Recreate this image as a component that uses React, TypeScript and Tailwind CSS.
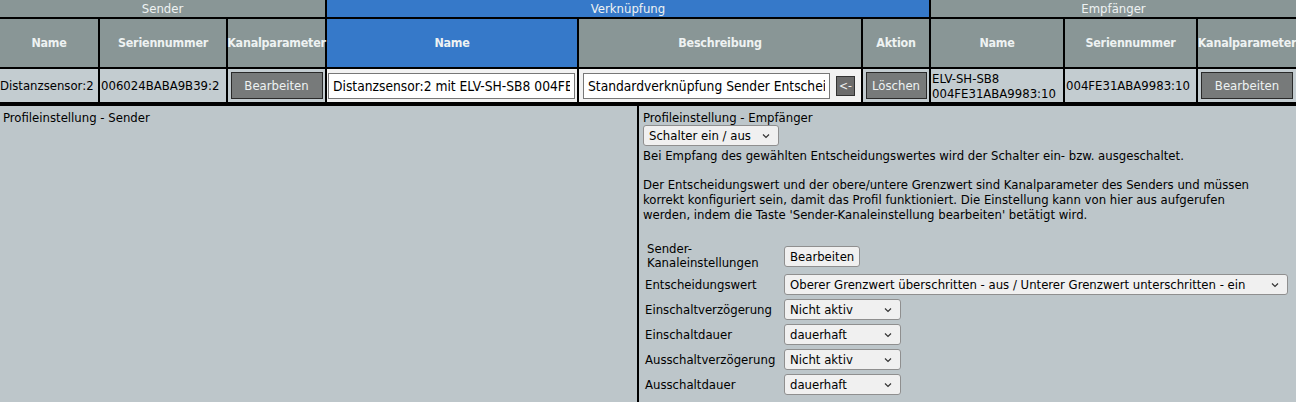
import React from "react";

/* ---------------- HELPERS ---------------- */

const font = "font-['DejaVu_Sans_Condensed','DejaVu_Sans',sans-serif]";

function GrayBtn({ label, className = "" }: { label: string; className?: string }) {
  return (
    <button
      className={`bg-[#777a7a] border border-[#2a2a2a] text-[#eef2f2] text-[13px] leading-none ${className}`}
    >
      {label}
    </button>
  );
}

function Select({ value, className = "" }: { value: string; className?: string }) {
  return (
    <div
      className={`flex items-center justify-between h-[21px] bg-[#f0f0f0] border border-[#8f8f8f] rounded-[3px] pl-[5px] pr-[8px] text-[13px] text-black ${className}`}
    >
      <span className="whitespace-nowrap">{value}</span>
      <svg width="8" height="6" viewBox="0 0 8 6" className="ml-2 shrink-0">
        <path d="M1 1.5 L4 4.5 L7 1.5" fill="none" stroke="#333" strokeWidth="1.2" />
      </svg>
    </div>
  );
}

const HeadCell = ({ label, blue }: { label: string; blue?: boolean }) => (
  <div
    className={`flex items-center justify-center font-bold text-[12.4px] tracking-[-0.2px] text-[#eef2f2] whitespace-nowrap ${
      blue ? "bg-[#3679c9]" : "bg-[#899696]"
    }`}
  >
    {label}
  </div>
);

const TextInput = ({ value }: { value: string }) => (
  <input
    readOnly
    value={value}
    className="w-[247px] h-[26px] bg-white border border-[#777] px-[4px] text-[13.7px] text-black outline-none"
  />
);

/* ---------------- FORM ROWS ---------------- */

const formRows = [
  { label: "Entscheidungswert", value: "Oberer Grenzwert überschritten - aus / Unterer Grenzwert unterschritten - ein", w: "w-[504px]" },
  { label: "Einschaltverzögerung", value: "Nicht aktiv", w: "w-[117px]" },
  { label: "Einschaltdauer", value: "dauerhaft", w: "w-[117px]" },
  { label: "Ausschaltverzögerung", value: "Nicht aktiv", w: "w-[117px]" },
  { label: "Ausschaltdauer", value: "dauerhaft", w: "w-[117px]" },
];

/* ---------------- APP ---------------- */

export default function App() {
  return (
    <div className={`${font} w-[1296px] h-[402px] bg-[#bdc6ca] text-[13px] text-black overflow-hidden flex flex-col`}>
      {/* TOP TABLE */}
      <div className="grid grid-cols-[98px_126px_97px_250px_282px_66px_132px_131px_98px] grid-rows-[17px_48px_33px] gap-[2px] bg-black border-b-[4px] border-black">
        {/* group headers */}
        <div className="col-span-3 flex items-center justify-center bg-[#899696] text-[#eef2f2] text-[13px]">Sender</div>
        <div className="col-span-3 flex items-center justify-center bg-[#3679c9] text-[#eef2f2] text-[13px]">Verknüpfung</div>
        <div className="col-span-3 flex items-center justify-center bg-[#899696] text-[#eef2f2] text-[13px]">Empfänger</div>

        {/* column headers */}
        <HeadCell label="Name" />
        <HeadCell label="Seriennummer" />
        <HeadCell label="Kanalparameter" />
        <HeadCell label="Name" blue />
        <HeadCell label="Beschreibung" />
        <HeadCell label="Aktion" />
        <HeadCell label="Name" />
        <HeadCell label="Seriennummer" />
        <HeadCell label="Kanalparameter" />

        {/* data row */}
        <div className="bg-[#c3ccd0] flex items-center whitespace-nowrap overflow-hidden">Distanzsensor:2</div>
        <div className="bg-[#c3ccd0] flex items-center pl-[1px] whitespace-nowrap overflow-hidden">006024BABA9B39:2</div>
        <div className="bg-[#c3ccd0] flex items-center justify-center">
          <GrayBtn label="Bearbeiten" className="w-[92px] h-[27px]" />
        </div>
        <div className="bg-[#f2f2f2] flex items-center pl-[1px]">
          <TextInput value="Distanzsensor:2 mit ELV-SH-SB8 004FE31ABA9983:10" />
        </div>
        <div className="bg-[#f2f2f2] flex items-center pl-[4px] gap-[6px]">
          <TextInput value="Standardverknüpfung Sender Entscheidungswert" />
          <div className="w-[19px] h-[20px] bg-[#6c6c6c] border border-[#333] text-[#eee] flex items-center justify-center text-[12px] leading-none">
            &lt;-
          </div>
        </div>
        <div className="bg-[#c3ccd0] flex items-center justify-center">
          <GrayBtn label="Löschen" className="w-[61px] h-[27px]" />
        </div>
        <div className="bg-[#c3ccd0] flex flex-col justify-center pl-[1px] leading-[15px] whitespace-nowrap overflow-hidden">
          <span>ELV-SH-SB8</span>
          <span>004FE31ABA9983:10</span>
        </div>
        <div className="bg-[#c3ccd0] flex items-center pl-[1px] whitespace-nowrap overflow-hidden">004FE31ABA9983:10</div>
        <div className="bg-[#c3ccd0] flex items-center justify-center">
          <GrayBtn label="Bearbeiten" className="w-[92px] h-[27px]" />
        </div>
      </div>

      {/* PROFILE PANELS */}
      <div className="flex flex-1">
        <div className="w-[639px] border-r-2 border-black px-[3px] pt-[5px] leading-[14px]">
          Profileinstellung - Sender
        </div>

        <div className="flex-1 pl-[4px] pt-[5px] leading-[15px]">
          <div className="leading-[14px]">Profileinstellung - Empfänger</div>
          <Select value="Schalter ein / aus" className="w-[136px]" />
          <p className="mt-[2px]">Bei Empfang des gewählten Entscheidungswertes wird der Schalter ein- bzw. ausgeschaltet.</p>
          <p className="mt-[14px] w-[620px]">
            Der Entscheidungswert und der obere/untere Grenzwert sind Kanalparameter des Senders und müssen korrekt
            konfiguriert sein, damit das Profil funktioniert. Die Einstellung kann von hier aus aufgerufen werden, indem die
            Taste 'Sender-Kanaleinstellung bearbeiten' betätigt wird.
          </p>

          {/* FORM */}
          <div className="mt-[20px] pl-[2px] grid grid-cols-[139px_auto] items-center gap-y-[4px] justify-start">
            <div className="leading-[14px] pl-[2px]">
              Sender-
              <br />
              Kanaleinstellungen
            </div>
            <div>
              <button className="h-[21px] px-[5px] bg-[#f0f0f0] border border-[#8f8f8f] rounded-[3px] text-[13px] leading-none">
                Bearbeiten
              </button>
            </div>
            {formRows.map((r) => (
              <React.Fragment key={r.label}>
                <div className="whitespace-nowrap">{r.label}</div>
                <Select value={r.value} className={r.w} />
              </React.Fragment>
            ))}
          </div>
        </div>
      </div>
    </div>
  );
}
